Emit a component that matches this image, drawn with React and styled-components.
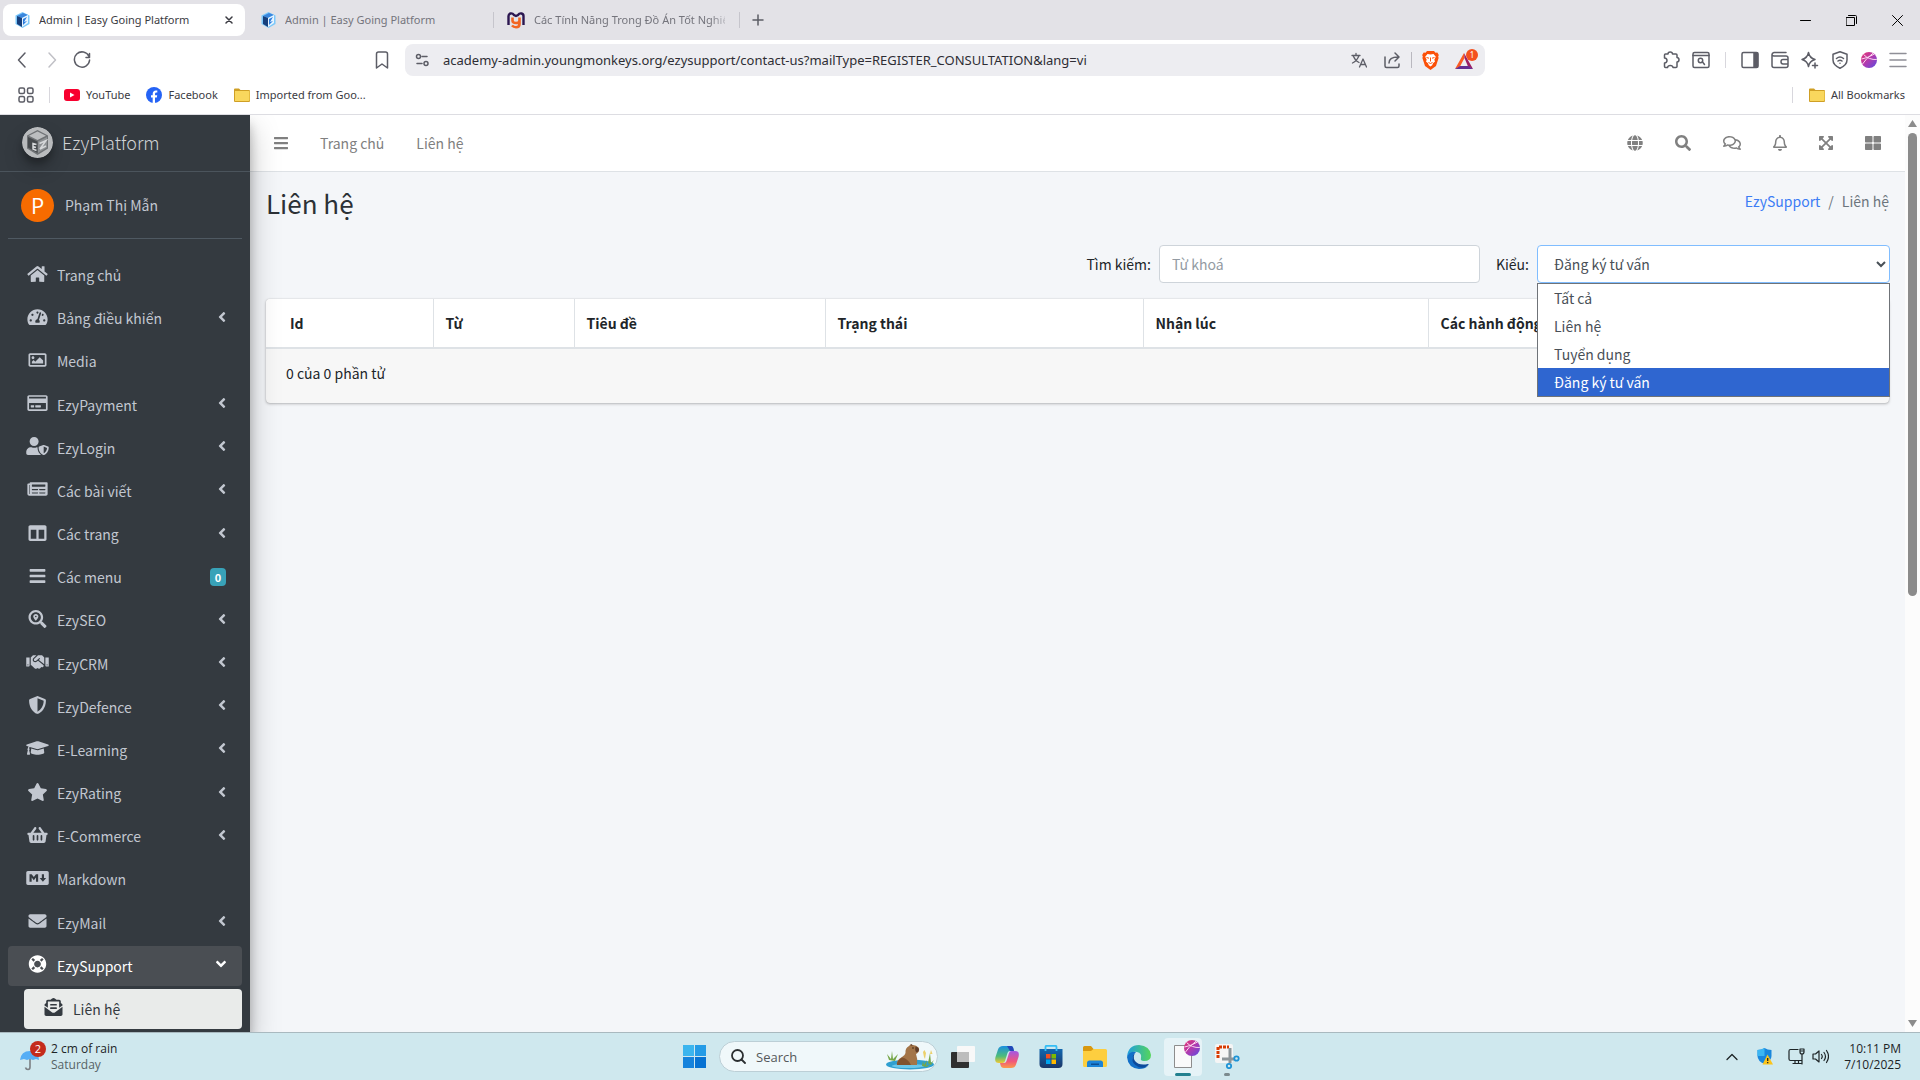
import React from "react";
import styled, { createGlobalStyle } from "styled-components";
import {
  FaHome, FaTachometerAlt, FaRegImage, FaRegCreditCard, FaUserShield, FaNewspaper, FaColumns, FaBars,
  FaSearchLocation, FaHandshake, FaShieldAlt, FaGraduationCap, FaStar, FaShoppingBasket, FaMarkdown,
  FaEnvelope, FaLifeRing, FaEnvelopeOpenText, FaAngleLeft, FaAngleDown, FaGlobe, FaSearch, FaRegComments,
  FaRegBell, FaExpandArrowsAlt, FaThLarge,
} from "react-icons/fa";

const appFont = `"Noto Sans CJK SC", "Noto Sans", sans-serif`;
const uiFont = `"Open Sans", "Noto Sans", sans-serif`;
const browserFont = `"Noto Sans", "Open Sans", sans-serif`;

const Global = createGlobalStyle`
  *, *::before, *::after { box-sizing: border-box; }
  body { margin: 0; overflow: hidden; }
  button, input, select { font: inherit; color: inherit; }
  button { border: 0; padding: 0; background: none; display: flex; align-items: center; justify-content: center; }
  a { color: inherit; text-decoration: none; }
  ul, ol { list-style: none; margin: 0; padding: 0; }
  svg { display: block; flex: none; }
`;

const Screen = styled.div`
  display: flex;
  flex-direction: column;
  height: 100vh;
  font: 11px/16px ${browserFont};
`;

/* ---------- browser ---------- */
const TabStrip = styled.div`
  display: flex;
  align-items: center;
  height: 40px;
  padding-left: 3px;
  background: #e3e2e7;
`;
const Tab = styled.div`
  display: flex;
  align-items: center;
  gap: 9px;
  width: 242px;
  height: 32px;
  padding: 0 12px;
  border-radius: 8px;
  background: ${(p) => (p.$active ? "#fff" : "transparent")};
  color: ${(p) => (p.$active ? "#3b3b42" : "#74747c")};
`;
const TabTitle = styled.span`
  flex: 1;
  overflow: hidden;
  white-space: nowrap;
  mask-image: ${(p) => (p.$fade ? "linear-gradient(90deg, #000 176px, transparent 198px)" : "none")};
`;
const TabGap = styled.div`
  width: 4px;
  height: 16px;
  display: flex;
  justify-content: center;
  &::before {
    content: "";
    width: 1px;
    background: ${(p) => (p.$line ? "#c6c5cc" : "transparent")};
  }
`;
const PlusButton = styled.button`
  width: 34px;
  height: 32px;
`;
const WindowButtons = styled.div`
  display: flex;
  height: 100%;
  margin-left: auto;
  button { width: 46px; }
`;
const Toolbar = styled.div`
  display: flex;
  align-items: center;
  height: 40px;
  background: #fff;
`;
const NavButtons = styled.div`
  display: flex;
  align-items: center;
  width: 405px;
  padding: 0 12px 0 11px;
  button { width: 22px; height: 28px; }
  button + button { margin-left: 8px; }
  button:last-child { margin-left: auto; }
`;
const AddressBar = styled.div`
  display: flex;
  align-items: center;
  flex: 1;
  height: 32px;
  padding: 0 6px 0 10px;
  border-radius: 8px;
  background: #ededf1;
`;
const AddressInput = styled.input`
  flex: 1;
  margin-left: 14px;
  padding: 0;
  border: 0;
  outline: 0;
  background: transparent;
  color: #2e2d34;
  font-size: 13px;
  line-height: 20px;
`;
const AddressTools = styled.div`
  display: flex;
  align-items: center;
  gap: 10px;
`;
const ToolPair = styled.div`
  display: flex;
  align-items: center;
  gap: 16px;
`;
const Rule = styled.span`
  width: 1px;
  height: 16px;
  background: ${(p) => p.$color || "#d8d7dd"};
`;
const Extensions = styled.div`
  display: flex;
  align-items: center;
  justify-content: flex-end;
  gap: 12px;
  width: 435px;
  padding-right: 13px;
  ${Rule} { margin: 0 3px; }
`;
const BookmarkBar = styled.div`
  display: flex;
  align-items: center;
  height: 35px;
  padding: 0 15px 4px 18px;
  border-bottom: 1px solid #dddde2;
  background: #fff;
  color: #3b3b42;
`;
const Bookmark = styled.a`
  display: flex;
  align-items: center;
  gap: 6px;
  margin-left: ${(p) => p.$gap || 16}px;
`;
const AllBookmarks = styled.div`
  display: flex;
  align-items: center;
  margin-left: auto;
`;

/* ---------- app frame ---------- */
const Page = styled.div`
  display: flex;
  flex: 1;
  min-height: 0;
  overflow: hidden;
  background: #f4f6f9;
  color: #212529;
  font: 14px/24px ${appFont};
`;
const Sidebar = styled.aside`
  position: relative;
  z-index: 2;
  display: flex;
  flex-direction: column;
  width: 250px;
  background: #343a40;
  color: #c2c7d0;
  box-shadow: 0 14px 28px rgba(0, 0, 0, 0.25), 0 10px 10px rgba(0, 0, 0, 0.22);
`;
const Brand = styled.a`
  display: flex;
  align-items: center;
  gap: 9px;
  height: 57px;
  padding: 0 22px 2px;
  border-bottom: 1px solid #4b545c;
  font-size: 18px;
  font-weight: 300;
  color: #d0d2d5;
`;
const BrandLogo = styled.svg`
  border-radius: 50%;
  box-shadow: 0 10px 20px rgba(0, 0, 0, 0.19), 0 6px 6px rgba(0, 0, 0, 0.23);
`;
const UserPanel = styled.a`
  display: flex;
  align-items: center;
  gap: 11px;
  height: 67px;
  margin: 0 8px;
  padding: 0 13px;
  border-bottom: 1px solid #4f5962;
`;
const Avatar = styled.span`
  width: 33px;
  height: 33px;
  border-radius: 50%;
  background: #f76b00;
  color: #fff;
  font: 22px/33px ${uiFont};
  text-align: center;
`;
const Menu = styled.ul`
  display: flex;
  flex: 1;
  flex-direction: column;
  justify-content: space-between;
  padding: 16px 8px 3px;
`;
const MenuLink = styled.a`
  display: flex;
  align-items: center;
  height: 40px;
  margin-left: ${(p) => (p.$sub ? 16 : 0)}px;
  padding: 0 16px;
  border-radius: 4px;
  background: ${(p) => (p.$sub ? "#e9ebea" : p.$open ? "#4a4e53" : "transparent")};
  color: ${(p) => (p.$sub ? "#343a40" : p.$open ? "#fff" : "inherit")};
`;
const MenuIcon = styled.span`
  width: 27px;
  margin-right: 6px;
  padding-bottom: 3px;
  svg { width: 100%; height: 18px; }
`;
const MenuArrow = styled.span`
  margin-left: auto;
  padding-bottom: 3px;
  svg { width: ${(p) => (p.$open ? 10 : 8)}px; height: 16px; }
`;
const Badge = styled.span`
  margin-left: auto;
  width: 16px;
  border-radius: 4px;
  background: #38a2b8;
  color: #fff;
  font-size: 11px;
  font-weight: 700;
  line-height: 18px;
  text-align: center;
`;
const Main = styled.main`
  flex: 1;
  min-width: 0;
`;
const TopNav = styled.header`
  display: flex;
  align-items: center;
  height: 57px;
  padding: 0 24px;
  border-bottom: 1px solid #dee2e6;
  background: #fff;
  color: #808080;
`;
const TopLink = styled.a`
  margin-left: 32px;
`;
const TopButton = styled.button`
  svg { width: ${(p) => p.$width}px; height: 16px; }
`;
const TopIcons = styled.div`
  display: flex;
  align-items: center;
  gap: 32px;
  margin-left: auto;
`;
const PageHead = styled.div`
  display: flex;
  justify-content: space-between;
  align-items: flex-start;
  padding: 15px 16px 0;
`;
const Title = styled.h1`
  margin: 0;
  color: #2c3136;
  font-size: 26px;
  font-weight: 400;
  line-height: 32px;
`;
const Crumbs = styled.nav`
  display: flex;
  gap: 8px;
  padding-top: 2px;
  color: #6c757d;
  a { color: #3b7cf5; }
`;
const Filters = styled.form`
  display: flex;
  align-items: center;
  justify-content: flex-end;
  padding: 26px 15px 16px;
`;
const FieldLabel = styled.label`
  margin: 0 8px 0 16px;
`;
const SearchField = styled.input`
  width: 321px;
  height: 38px;
  padding: 0 12px;
  border: 1px solid #ced4da;
  border-radius: 4px;
  background: #fff;
  &::placeholder { color: #939ba2; }
`;
const SelectWrap = styled.div`
  position: relative;
  width: 353px;
`;
const TypeSelect = styled.select`
  display: block;
  width: 100%;
  height: 38px;
  padding: 0 12px;
  border: 1px solid #80bdff;
  border-radius: 4px;
  background: #fff;
  color: #495057;
  outline: 0;
`;
const Options = styled.ul`
  position: absolute;
  z-index: 3;
  top: 100%;
  left: 0;
  right: 0;
  border: 1px solid #6f7378;
  background: #fff;
  color: #495057;
`;
const Option = styled.li`
  padding: 0 16px;
  line-height: 28px;
  background: ${(p) => (p["aria-selected"] ? "#2f66d0" : "transparent")};
  color: ${(p) => (p["aria-selected"] ? "#fff" : "inherit")};
`;
const Card = styled.section`
  margin: 0 16px;
  border-radius: 4px;
  overflow: hidden;
  background: #f7f7f7;
  box-shadow: 0 0 1px rgba(0, 0, 0, 0.25), 0 1px 3px rgba(0, 0, 0, 0.25);
`;
const Table = styled.table`
  width: 100%;
  table-layout: fixed;
  border-collapse: collapse;
  background: #fff;
  th {
    height: 49px;
    padding: 0 12px;
    border-right: 1px solid #dee2e6;
    border-bottom: 2px solid #dee2e6;
    text-align: left;
    font-weight: 700;
  }
  th:first-child { padding-left: 24px; }
  th:last-child { border-right: 0; }
`;
const CardFoot = styled.div`
  padding: 12px 20px 18px;
`;
const ScrollTrack = styled.div`
  display: flex;
  flex-direction: column;
  align-items: center;
  width: 15px;
  padding: 5px 0;
  background: #fcfcfc;
`;
const ScrollThumb = styled.div`
  width: 9px;
  height: 51%;
  margin: 6px 0 auto;
  border-radius: 5px;
  background: #8b8b8b;
`;

/* ---------- taskbar ---------- */
const Taskbar = styled.footer`
  display: grid;
  grid-template-columns: 1fr auto 1fr;
  align-items: center;
  height: 48px;
  border-top: 1px solid #a9b9bf;
  background: #cfe8ee;
  color: #1d2426;
  font: 12px/16px ${uiFont};
`;
const Weather = styled.button`
  justify-content: flex-start;
  gap: 5px;
  margin-left: 18px;
  text-align: left;
`;
const Muted = styled.span`
  color: #566366;
`;
const Lines = styled.span`
  display: flex;
  flex-direction: column;
  align-items: ${(p) => (p.$end ? "flex-end" : "flex-start")};
`;
const Dock = styled.div`
  display: flex;
  align-items: center;
  gap: 6px;
  margin-left: 1px;
`;
const DockButton = styled.button`
  position: relative;
  width: 38px;
  height: 38px;
  border-radius: 4px;
  background: ${(p) => (p.$active ? "#e6f3f7" : "none")};
  &::after {
    content: "";
    display: ${(p) => (p.$mark ? "block" : "none")};
    position: absolute;
    bottom: 0;
    width: ${(p) => p.$mark}px;
    height: 3px;
    border-radius: 2px;
    background: ${(p) => (p.$active ? "#23808f" : "#7b8a8e")};
  }
`;
const SearchPill = styled.label`
  display: flex;
  align-items: center;
  width: 219px;
  height: 31px;
  padding: 0 3px 0 11px;
  border: 1px solid #bccfd6;
  border-radius: 16px;
  background: #f0f8fa;
`;
const PillInput = styled.input`
  flex: 1;
  min-width: 0;
  margin-left: 10px;
  padding: 0;
  border: 0;
  background: transparent;
  font-size: 13px;
  &::placeholder { color: #55595b; }
`;
const Tray = styled.div`
  display: flex;
  align-items: center;
  justify-content: flex-end;
  padding-right: 19px;
`;
const TrayButton = styled.button`
  margin-left: ${(p) => p.$gap || 0}px;
`;

/* ---------- drawings ---------- */
const Line = ({ size = 18, width = 1.5, color = "#5c5d66", children, h }) => (
  <svg width={size} height={h || size} viewBox={`0 0 ${size} ${h || size}`} fill="none" stroke={color} strokeWidth={width} strokeLinecap="round" strokeLinejoin="round" aria-hidden="true">
    {children}
  </svg>
);
const CubeIcon = () => (
  <svg width="15" height="16" viewBox="0 0 15 16" aria-hidden="true">
    <path d="M7.500 0 14.500 3.500V12L7.500 16 .5 12V3.500z" fill="#7cc8fa" />
    <path d="M2 4l6-3 5 2-6 3z" fill="#3a86dd" />
    <path d="M2 4l5 2v9l-5-3z" fill="#173f7c" />
    <path d="M7 6l6-3v8l-6 4z" fill="#e8f5ff" />
    <path d="M8 7l4-2-3 5 3-1-4 4z" fill="#2b7de0" />
  </svg>
);
const MIcon = () => (
  <svg width="18" height="17" viewBox="0 0 18 17" fill="none" aria-hidden="true">
    <path d="M1.500 13V4q0-2 2-2.500Q5.500 1 7 3l2 1 2-1q1.500-2 3.500-1.500 2 .5 2 2.500v9" stroke="#2b1650" strokeWidth="2.400" />
    <path d="M5.500 5.500v3q0 2.500 3.500 2.500t3.500-2.500v-3V12q0 3.200-3.500 3.200-2.500 0-4-1.700" stroke="#f26522" strokeWidth="2.600" />
  </svg>
);
const FolderIcon = () => (
  <svg width="16" height="14" viewBox="0 0 16 14" aria-hidden="true">
    <path d="M0 1.500Q0 .5 1 .5h4l1.500 1.500H15q1 0 1 1V13q0 1-1 1H1q-1 0-1-1z" fill="#cf9f25" />
    <path d="M1 3h14.500v9q0 1-1 1H1z" fill="#f9d75d" />
  </svg>
);
const BallIcon = ({ size = 16 }) => (
  <svg width={size} height={size} viewBox="0 0 16 16" aria-hidden="true">
    <defs>
      <linearGradient id="ball" x1="0" y1="0" x2="1" y2="1">
        <stop offset="0" stopColor="#e8336d" />
        <stop offset=".5" stopColor="#b03bb0" />
        <stop offset="1" stopColor="#5a4be0" />
      </linearGradient>
    </defs>
    <circle cx="8" cy="8" r="8" fill="url(#ball)" />
    <path d="M.5 7Q7 6 13.500 2M2.500 2.500Q8 8 15.800 7.500M1.500 12Q5 6.500 12 1.200" stroke="#fbd5ef" strokeWidth="1" fill="none" />
  </svg>
);
const EzyLogo = () => (
  <BrandLogo width="31" height="31" viewBox="0 0 31 31" aria-hidden="true">
    <circle cx="15.500" cy="15.500" r="15.500" fill="#b9bbbd" />
    <path d="M15.500 3 26 8.500V21.500L15.500 28 5 21.500V8.500z" fill="#6f7275" />
    <path d="M15.500 4.500 24 8.700 15.500 13 7 8.700z" fill="#bcbec0" />
    <path d="M6 10l9.500 4.500V26L6 20.500z" fill="#45494c" />
    <path d="M16 14.500 25 10v10.500L16 26z" fill="#8d9093" />
    <path d="M14.500 17.500 11 16.500v5.500l3.500 1.500M11 19.500l3 1M17.500 16.500l6.500-3-6 8.500 6-3" stroke="#d5d7d9" strokeWidth="1.500" fill="none" />
  </BrandLogo>
);
const BraveIcon = () => (
  <svg width="17" height="19" viewBox="0 0 17 19" aria-hidden="true">
    <path d="M5 0h7l1.500 1.800 1.800-.2L16.800 4l-.6 1.500.4 1.500-2.600 8L8.500 19 3 15 .4 7l.4-1.500L.2 4l1.500-2.400 1.800.2z" fill="#fb5008" />
    <path d="M8.500 3.500l3-.5 2.300 2.800-1.500 3 .7 1.700-2 1.700-.8 2-1.700 1.300-1.700-1.300-.8-2-2-1.700.7-1.700-1.500-3L5.500 3z" fill="#fff" />
    <path d="M4.500 6.500l2.500.7M12.500 6.500 10 7.200M8.500 6.500v4M6.500 11.500l2 1 2-1" stroke="#fb5008" strokeWidth="1" fill="none" />
  </svg>
);
const BatIcon = () => (
  <svg width="24" height="22" viewBox="0 0 24 22" aria-hidden="true">
    <path d="M9 4 0 20l5-2.500L9.500 9z" fill="#fb5b22" />
    <path d="M9 4l9 16-5-2.500L9.500 9z" fill="#9e1f63" />
    <path d="M0 20h18l-4.500-3H5z" fill="#662d91" />
    <circle cx="17" cy="6" r="6" fill="#f4511e" />
    <text x="17" y="9" fontSize="8" fill="#fff" textAnchor="middle">1</text>
  </svg>
);
const CapyIcon = () => (
  <svg width="48" height="27" viewBox="0 0 48 27" aria-hidden="true">
    <ellipse cx="24" cy="21.500" rx="24" ry="5" fill="#2f9fd0" />
    <ellipse cx="22" cy="23" rx="16" ry="2" fill="#6cc8ea" />
    <path d="M11 22q-1-5 5-8 3-1.500 3.500-4Q19 5 23 3l1.500-1.500L26 2q4-.5 6.500 2.500 1.500 3-.5 5-1 1-2 1.500 2 5 1 11z" fill="#a37548" />
    <path d="M11 22q0-5 5-7.500 6 1 9 7.500z" fill="#80532f" />
    <path d="M29.500 3.500q3.500.5 3.500 3.500-.5 2-2.500 2.500-2-2-1-6z" fill="#5f3d28" />
    <path d="M24 2l2-1 .5 2z" fill="#5f3d28" />
    <circle cx="27" cy="5" r=".7" fill="#22160d" />
    <path d="M3 17 1 11l4 5 1-8 1 8 5-5-3 7zM36 23l1-5 1 4 3-5-1 6 4-2-3 3zM42 20l2-10 1 10 3-3-3 5z" fill="#76a748" />
    <path d="M38 14l-1-5 1.500-2L40 10l-1 6zM44 11l1-4 1.500 4z" fill="#ecd06a" />
  </svg>
);
const WinIcon = () => (
  <svg width="23" height="23" viewBox="0 0 23 23" fill="#1583dc" aria-hidden="true">
    <path d="M0 0h11v11H0z" fill="#3bb5ee" /><path d="M12 0h11v11H12z" fill="#249be6" />
    <path d="M0 12h11v11H0z" /><path d="M12 12h11v11H12z" fill="#0672d2" />
  </svg>
);
const TaskViewIcon = () => (
  <svg width="24" height="22" viewBox="0 0 24 22" aria-hidden="true">
    <rect x="6" width="18" height="16" rx="1" fill="#f8f8f8" />
    <rect y="6" width="18" height="16" rx="1" fill="#303030" />
    <rect x="6" y="6" width="12" height="10" fill="#bdbdbd" />
  </svg>
);
const CopilotIcon = () => (
  <svg width="24" height="22" viewBox="0 0 24 22" aria-hidden="true">
    <defs>
      <linearGradient id="co1" x1="0" y1="0" x2="0" y2="1"><stop offset="0" stopColor="#1b8fe0" /><stop offset=".6" stopColor="#4dbd7a" /><stop offset="1" stopColor="#f2c832" /></linearGradient>
      <linearGradient id="co2" x1="0" y1="0" x2="0" y2="1"><stop offset="0" stopColor="#a257e5" /><stop offset=".6" stopColor="#f0567c" /><stop offset="1" stopColor="#fb9a4b" /></linearGradient>
    </defs>
    <path d="M8 0h8q2 0 2.500 3L19 5h-4q-2 0-2.500 2L10 15q-.5 2-2.500 2H4q-5 0-3.500-6L3 3.500Q4 0 8 0z" fill="url(#co1)" />
    <path d="M12 0h4q2 0 2.500 3L19 5h-4z" fill="#2347b8" />
    <path d="M16 22H9q-3 0-3.500-3L5 17h4q2 0 2.500-2L14 7q.5-2 2.500-2H20q5 0 3.500 6L21 18.500Q20 22 16 22z" fill="url(#co2)" />
  </svg>
);
const StoreIcon = () => (
  <svg width="24" height="23" viewBox="0 0 24 23" aria-hidden="true">
    <defs>
      <linearGradient id="store" x1="0" y1="0" x2="0" y2="1"><stop offset="0" stopColor="#1267b0" /><stop offset="1" stopColor="#1b3768" /></linearGradient>
    </defs>
    <path d="M.5 4h23v15q0 4-4 4h-15q-4 0-4-4z" fill="url(#store)" />
    <path d="M6.500 6V2q0-1.200 1-1.200h9q1 0 1 1.200v4" fill="none" stroke="#35bdf5" strokeWidth="1.800" />
    <path d="M7 9h4.500v4.500H7z" fill="#f25022" /><path d="M12.500 9H17v4.500h-4.500z" fill="#7fba00" />
    <path d="M7 14.500h4.500V19H7z" fill="#00a4ef" /><path d="M12.500 14.500H17V19h-4.500z" fill="#ffb900" />
  </svg>
);
const ExplorerIcon = () => (
  <svg width="24" height="22" viewBox="0 0 24 22" aria-hidden="true">
    <path d="M0 1.500Q0 0 1.500 0H8l2.500 3H22v8H0z" fill="#d9980f" />
    <path d="M0 5h8l2.500-2H22.500Q24 3 24 4.500v15q0 1.500-1.500 1.500h-21Q0 21 0 19.500z" fill="#fdce3f" />
    <path d="M4 21v-4q0-2.500 2.500-2.500h11q2.500 0 2.500 2.500v4z" fill="#1b84d8" />
    <path d="M8 17.500h8V19H8z" fill="#0b4f94" />
  </svg>
);
const EdgeIcon = () => (
  <svg width="24" height="24" viewBox="0 0 24 24" aria-hidden="true">
    <defs>
      <linearGradient id="edge1" x1="0" y1="0" x2="1" y2="0"><stop offset="0" stopColor="#1f9de0" /><stop offset="1" stopColor="#55d65a" /></linearGradient>
    </defs>
    <path d="M0 12Q1 0 12 0q11 1 12 10 0 6-7 6-4 0-3-3 1-5-4-6Q3 6 0 12z" fill="url(#edge1)" />
    <path d="M0 12Q2 6 9 7q-4 3-3 8 2 7 10 7 3 0 5-1-3 3-9 3Q1 23 0 12z" fill="#1370c8" />
    <path d="M9 7q-4 4-1 9 4 5 13 3 1 0 .5 1-4 4-10 2-7-3-6-9Q6 9 9 7z" fill="#0c4a9c" />
  </svg>
);
const BlankDocIcon = () => (
  <svg width="34" height="34" viewBox="0 0 34 34" aria-hidden="true">
    <path d="M8.500 5.500h17v22h-17z" fill="#fafafa" stroke="#8d8d8d" />
    <circle cx="26" cy="8" r="8" fill="url(#ball)" />
    <path d="M18.500 7Q25 6 31.500 2M20.500 2.500Q26 8 33.800 7.500M19.500 12Q23 6.500 30 1.200" stroke="#fbd5ef" fill="none" />
  </svg>
);
const SnipIcon = () => (
  <svg width="25" height="25" viewBox="0 0 25 25" aria-hidden="true">
    <rect width="18" height="19" rx="2" fill="#f5f5f5" />
    <path d="M3 14V3h11" fill="none" stroke="#d83b01" strokeWidth="3" strokeDasharray="3 1" />
    <path d="M15 4v15M7 15h12" stroke="#8d9599" strokeWidth="3" />
    <circle cx="21.500" cy="14.500" r="2.200" fill="none" stroke="#1e93d6" strokeWidth="1.800" />
    <circle cx="14" cy="22" r="2.200" fill="none" stroke="#1e93d6" strokeWidth="1.800" />
  </svg>
);
const UmbrellaIcon = () => (
  <svg width="28" height="32" viewBox="0 0 28 32" aria-hidden="true">
    <path d="M12 14v12q0 2.500-2 2.500T7.500 26.500" fill="none" stroke="#7b7f83" strokeWidth="1.600" />
    <path d="M2 19q1-9 10-9t9 9l-3-1-3 1-3-1-3 1-3-1z" fill="#56aef5" />
    <circle cx="20" cy="8" r="8" fill="#c42b1c" />
    <text x="20" y="12" fontSize="11" fill="#fff" textAnchor="middle">2</text>
  </svg>
);
const DefenderIcon = () => (
  <svg width="16" height="17" viewBox="0 0 16 17" aria-hidden="true">
    <path d="M7.500 0q3 2 7 2v6q0 5-7 8Q.5 13 .5 8V2q4 0 7-2z" fill="#1a87dc" />
    <path d="M7.500 0v8h-7V2q4 0 7-2z" fill="#3cb6f2" />
    <path d="M10.500 6.500 16 16.500H5.500z" fill="#fcc419" />
    <path d="M10.700 10v3M10.700 14v1.300" stroke="#222" strokeWidth="1.300" />
  </svg>
);

/* ---------- data ---------- */
const menu = [
  { label: "Trang chủ", icon: FaHome },
  { label: "Bảng điều khiển", icon: FaTachometerAlt, arrow: true },
  { label: "Media", icon: FaRegImage },
  { label: "EzyPayment", icon: FaRegCreditCard, arrow: true },
  { label: "EzyLogin", icon: FaUserShield, arrow: true },
  { label: "Các bài viết", icon: FaNewspaper, arrow: true },
  { label: "Các trang", icon: FaColumns, arrow: true },
  { label: "Các menu", icon: FaBars, badge: "0" },
  { label: "EzySEO", icon: FaSearchLocation, arrow: true },
  { label: "EzyCRM", icon: FaHandshake, arrow: true },
  { label: "EzyDefence", icon: FaShieldAlt, arrow: true },
  { label: "E-Learning", icon: FaGraduationCap, arrow: true },
  { label: "EzyRating", icon: FaStar, arrow: true },
  { label: "E-Commerce", icon: FaShoppingBasket, arrow: true },
  { label: "Markdown", icon: FaMarkdown },
  { label: "EzyMail", icon: FaEnvelope, arrow: true },
  { label: "EzySupport", icon: FaLifeRing, arrow: true, open: true },
  { label: "Liên hệ", icon: FaEnvelopeOpenText, sub: true },
];
const topActions = [
  { label: "Language", icon: FaGlobe, width: 16 },
  { label: "Search", icon: FaSearch, width: 16 },
  { label: "Messages", icon: FaRegComments, width: 18 },
  { label: "Notifications", icon: FaRegBell, width: 14 },
  { label: "Full screen", icon: FaExpandArrowsAlt, width: 14 },
  { label: "Apps", icon: FaThLarge, width: 16 },
];
const columns = [
  { label: "Id", width: 167 },
  { label: "Từ", width: 141 },
  { label: "Tiêu đề", width: 251 },
  { label: "Trạng thái", width: 318 },
  { label: "Nhận lúc", width: 285 },
  { label: "Các hành động" },
];
const types = ["Tất cả", "Liên hệ", "Tuyển dụng", "Đăng ký tư vấn"];

function Browser() {
  return (
    <>
      <TabStrip>
        <Tab $active>
          <CubeIcon />
          <TabTitle>Admin | Easy Going Platform</TabTitle>
          <button aria-label="Close tab"><Line size={8} color="#3b3b42"><path d="M1 1l6 6M7 1 1 7" /></Line></button>
        </Tab>
        <TabGap />
        <Tab><CubeIcon /><TabTitle>Admin | Easy Going Platform</TabTitle></Tab>
        <TabGap $line />
        <Tab><MIcon /><TabTitle $fade>Các Tính Năng Trong Đồ Án Tốt Nghiệp</TabTitle></Tab>
        <TabGap $line />
        <PlusButton aria-label="New tab"><Line size={12}><path d="M6 1v10M1 6h10" /></Line></PlusButton>
        <WindowButtons>
          <button aria-label="Minimize"><Line size={11} width={1} color="#000"><path d="M.5 5.500h10" /></Line></button>
          <button aria-label="Restore"><Line size={11} width={1} color="#000"><path d="M.5 2.500h8v8h-8zM2.500.5h7q1 0 1 1v7" /></Line></button>
          <button aria-label="Close"><Line size={11} width={1} color="#000"><path d="M.5.5l10 10M10.500.5l-10 10" /></Line></button>
        </WindowButtons>
      </TabStrip>
      <Toolbar>
        <NavButtons>
          <button aria-label="Back"><Line><path d="M12 2 5.500 9l6.500 7" /></Line></button>
          <button aria-label="Forward"><Line color="#c0c0c6"><path d="M6 2l6.500 7L6 16" /></Line></button>
          <button aria-label="Reload"><Line><path d="M16 5.500A7.600 7.600 0 1 0 16.600 9M16.500 2.500v4h-3.500" /></Line></button>
          <button aria-label="Bookmark"><Line><path d="M3.500 3q0-2 2-2h7q2 0 2 2v14L9 13l-5.500 4z" /></Line></button>
        </NavButtons>
        <AddressBar>
          <Line size={14}><circle cx="3.500" cy="3.500" r="2" /><path d="M7 3.500h5M2 10.500h5" /><circle cx="11" cy="10.500" r="2" /></Line>
          <AddressInput aria-label="Address" readOnly value="academy-admin.youngmonkeys.org/ezysupport/contact-us?mailType=REGISTER_CONSULTATION&lang=vi" />
          <AddressTools>
            <ToolPair>
              <button aria-label="Translate"><Line size={16} width={1.300}><path d="M1 3.500h8M5 1.500v2M8 3.500Q6 9 1.500 11M2.500 4.500Q4.500 9 8 10.500M8.500 15 12 7l3.500 8M9.500 12.500h5" /></Line></button>
              <button aria-label="Share"><Line><path d="M2 6v9q0 1.500 1.500 1.500h11q1.500 0 1.500-1.500v-2M6 12q0-6 9-6M12 2l4 4-4 4" /></Line></button>
            </ToolPair>
            <Rule $color="#b9b8bf" />
            <ToolPair>
              <BraveIcon />
              <BatIcon />
            </ToolPair>
          </AddressTools>
        </AddressBar>
        <Extensions>
          <button aria-label="Extensions"><Line><path d="M2.500 4q0-1 1-1H6q0-2 2.200-2t2.300 2H14q1 0 1 1v2.500q2 .2 2 2.300t-2 2.200V15.500q0 1-1 1h-3q-.3-2-2.700-2T5.500 16.500h-2q-1 0-1-1v-3.500q2.500-.2 2.500-2.500T2.500 7z" /></Line></button>
          <button aria-label="Search tabs"><Line><rect x="1" y="1.500" width="16" height="15" rx="1.500" /><path d="M1 4.500h16M10.500 11l2 2.500" /><circle cx="8.500" cy="9.500" r="2.200" /></Line></button>
          <Rule />
          <button aria-label="Sidebar"><Line><rect x="1" y="1.500" width="16" height="15" rx="1.500" /><path d="M13 2h3.500v14H13z" fill="#5c5d66" /></Line></button>
          <button aria-label="Wallet"><Line><path d="M1 3.500v11q0 2 2 2h12q2 0 2-2V7q0-2-2-2H3Q1 5 1 3.500T3 1.500h12M17 8.500h-5q-2 0-2 2.200t2 2.200h5" /></Line></button>
          <button aria-label="Assistant"><Line><path d="M7.500 1.500Q8.500 7 14 8.500 8.500 10 7.500 15.500 6.500 10 1 8.500 6.500 7 7.500 1.500zM14 12v5M11.500 14.500h5" /></Line></button>
          <button aria-label="VPN"><Line><path d="M9 .8l7 2.500V9q0 5-7 8.200Q2 14 2 9V3.300zM5.500 7.500Q9 4.500 12.500 7.500M7 10q2-1.500 4 0M9 12.200v.1" /></Line></button>
          <BallIcon />
          <button aria-label="Menu"><Line color="#8f8f97"><path d="M1 2.500h16M1 9h16M1 15.500h16" /></Line></button>
        </Extensions>
      </Toolbar>
      <BookmarkBar>
        <Line size={16}><rect x="1" y="1" width="5.500" height="5.500" rx="1.500" /><rect x="9.500" y="1" width="5.500" height="5.500" rx="1.500" /><rect x="1" y="9.500" width="5.500" height="5.500" rx="1.500" /><rect x="9.500" y="9.500" width="5.500" height="5.500" rx="1.500" /></Line>
        <Bookmark as="span" $gap={15}><Rule /></Bookmark>
        <Bookmark href="#" $gap={14}>
          <svg width="16" height="12" viewBox="0 0 16 12" aria-hidden="true"><rect width="16" height="12" rx="3" fill="#f8002f" /><path d="M6 3.500v5l4.500-2.500z" fill="#fff" /></svg>
          YouTube
        </Bookmark>
        <Bookmark href="#">
          <svg width="16" height="16" viewBox="0 0 16 16" aria-hidden="true"><circle cx="8" cy="8" r="8" fill="#2563f5" /><path d="M6.700 16v-5.500H5V8.200h1.700V7q0-3.500 3.300-3.500l1.300.1v2h-.9q-1.400 0-1.400 1.300v1.300h2.200l-.4 2.300H9V16z" fill="#fff" /></svg>
          Facebook
        </Bookmark>
        <Bookmark href="#"><FolderIcon />Imported from Goo...</Bookmark>
        <AllBookmarks><Rule /><Bookmark href="#"><FolderIcon />All Bookmarks</Bookmark></AllBookmarks>
      </BookmarkBar>
    </>
  );
}

function SideMenu() {
  return (
    <Sidebar>
      <Brand href="#"><EzyLogo />EzyPlatform</Brand>
      <UserPanel href="#"><Avatar>P</Avatar>Phạm Thị Mẫn</UserPanel>
      <Menu>
        {menu.map(({ label, icon: Icon, arrow, badge, open, sub }, i) => (
          <li key={i}>
            <MenuLink href="#" $open={open} $sub={sub}>
              <MenuIcon><Icon /></MenuIcon>
              {label}
              {arrow && <MenuArrow $open={open}>{open ? <FaAngleDown /> : <FaAngleLeft />}</MenuArrow>}
              {badge && <Badge>{badge}</Badge>}
            </MenuLink>
          </li>
        ))}
      </Menu>
    </Sidebar>
  );
}

function Contact() {
  return (
    <Main>
      <TopNav>
        <TopButton $width={14} aria-label="Toggle menu"><FaBars /></TopButton>
        <TopLink href="#">Trang chủ</TopLink>
        <TopLink href="#">Liên hệ</TopLink>
        <TopIcons>
          {topActions.map(({ label, icon: Icon, width }) => (
            <TopButton key={label} $width={width} aria-label={label}><Icon /></TopButton>
          ))}
        </TopIcons>
      </TopNav>
      <PageHead>
        <Title>Liên hệ</Title>
        <Crumbs><a href="#">EzySupport</a><span>/</span><span>Liên hệ</span></Crumbs>
      </PageHead>
      <Filters>
        <FieldLabel htmlFor="keyword">Tìm kiếm:</FieldLabel>
        <SearchField id="keyword" placeholder="Từ khoá" />
        <FieldLabel htmlFor="type">Kiểu:</FieldLabel>
        <SelectWrap>
          <TypeSelect id="type" defaultValue={types[3]}>
            {types.map((t) => <option key={t}>{t}</option>)}
          </TypeSelect>
          <Options role="listbox" aria-label="Kiểu">
            {types.map((t, i) => <Option key={t} role="option" aria-selected={i === 3}>{t}</Option>)}
          </Options>
        </SelectWrap>
      </Filters>
      <Card>
        <Table>
          <colgroup>{columns.map((c) => <col key={c.label} width={c.width} />)}</colgroup>
          <thead><tr>{columns.map((c) => <th key={c.label} scope="col">{c.label}</th>)}</tr></thead>
        </Table>
        <CardFoot>0 của 0 phần tử</CardFoot>
      </Card>
    </Main>
  );
}

function WindowsBar() {
  return (
    <Taskbar>
      <Weather><UmbrellaIcon /><Lines><span>2 cm of rain</span><Muted>Saturday</Muted></Lines></Weather>
      <Dock>
        <DockButton aria-label="Start"><WinIcon /></DockButton>
        <SearchPill>
          <Line size={15} width={1.800} color="#2b2f31"><circle cx="6.500" cy="6.500" r="5.500" /><path d="M10.500 10.500l3.500 3.500" /></Line>
          <PillInput aria-label="Search" placeholder="Search" />
          <CapyIcon />
        </SearchPill>
        <DockButton aria-label="Task view"><TaskViewIcon /></DockButton>
        <DockButton aria-label="Copilot"><CopilotIcon /></DockButton>
        <DockButton aria-label="Store"><StoreIcon /></DockButton>
        <DockButton aria-label="File Explorer"><ExplorerIcon /></DockButton>
        <DockButton aria-label="Edge"><EdgeIcon /></DockButton>
        <DockButton aria-label="Browser" $active $mark={16}><BlankDocIcon /></DockButton>
        <DockButton aria-label="Snipping Tool" $mark={6}><SnipIcon /></DockButton>
      </Dock>
      <Tray>
        <TrayButton aria-label="Hidden icons"><Line size={12} width={1.300} color="#1d2426"><path d="M1 8.500l5-5 5 5" /></Line></TrayButton>
        <TrayButton $gap={19} aria-label="Security"><DefenderIcon /></TrayButton>
        <TrayButton $gap={15} aria-label="Network"><Line size={17} width={1.200} color="#1d2426"><path d="M10 1.500H2.500Q1 1.500 1 3v8q0 1.500 1.500 1.500h11M5 15.500h8M7 12.500v3M10.500 12.500v3M14 6v10M12 1h4v3q0 2-2 2t-2-2zM12 3h4" /></Line></TrayButton>
        <TrayButton $gap={7} aria-label="Volume"><Line size={17} width={1.200} color="#1d2426"><path d="M1 6h2.500L7 3v11l-3.500-3H1zM9.500 6.500q1.500 2 0 4M12 4.500q3 4 0 8M14.500 2.500q4 6 0 12" /></Line></TrayButton>
        <TrayButton $gap={15}><Lines $end><span>10:11 PM</span><span>7/10/2025</span></Lines></TrayButton>
      </Tray>
    </Taskbar>
  );
}

export default function App() {
  return (
    <Screen>
      <Global />
      <Browser />
      <Page>
        <SideMenu />
        <Contact />
        <ScrollTrack>
          <svg width="9" height="7" viewBox="0 0 9 7" aria-hidden="true"><path d="M4.500 0 9 7H0z" fill="#8b8b8b" /></svg>
          <ScrollThumb />
          <svg width="9" height="7" viewBox="0 0 9 7" aria-hidden="true"><path d="M4.500 7 9 0H0z" fill="#8b8b8b" /></svg>
        </ScrollTrack>
      </Page>
      <WindowsBar />
    </Screen>
  );
}
